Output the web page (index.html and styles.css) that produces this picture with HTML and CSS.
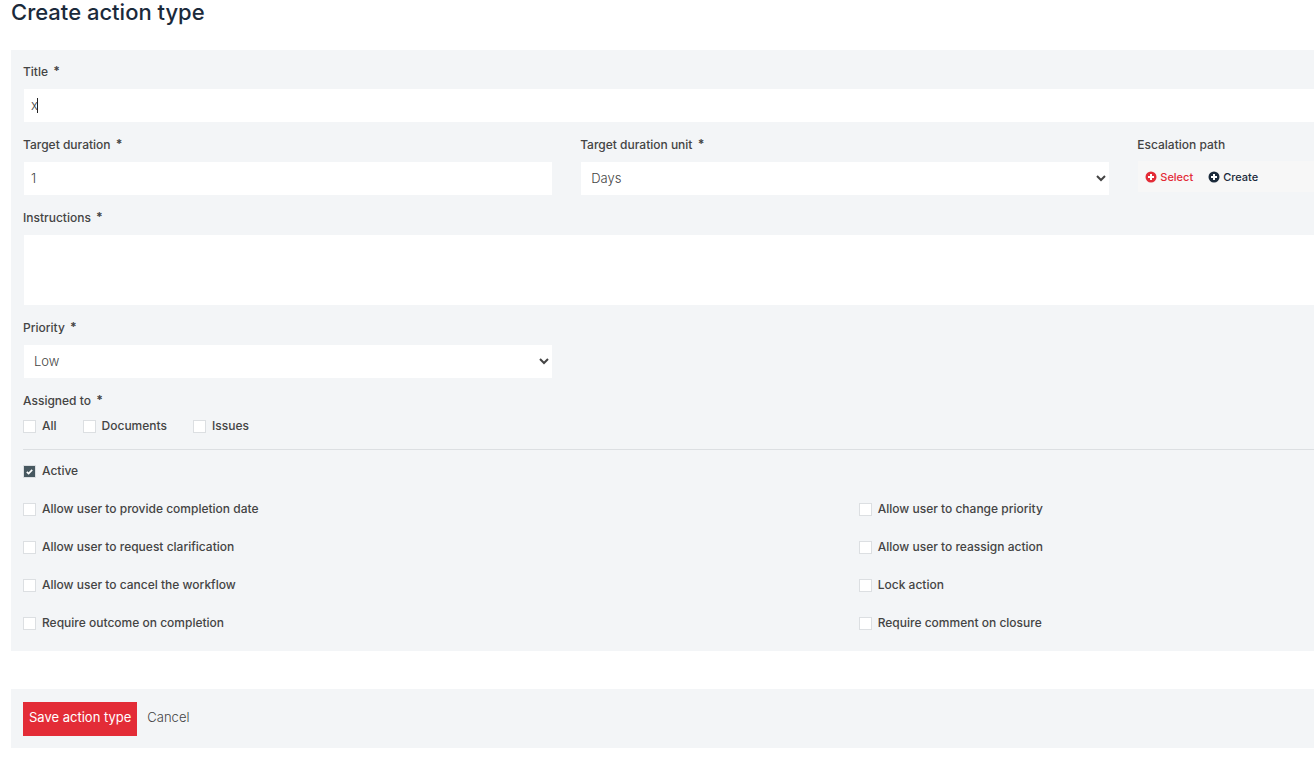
FILE: index.html
```html
<!DOCTYPE html>
<html lang="en">
<head>
  <meta charset="UTF-8" />
  <meta name="viewport" content="width=device-width, initial-scale=1.0" />
  <title>Create action type</title>
  <link rel="stylesheet" href="styles.css">
</head>
<body>
  <h1>Create action type</h1>

  <form>
    <div class="panel">
      <div class="field">
        <label for="title">Title <span class="required">*</span></label>
        <div class="input-wrap">
          <input type="text" id="title" class="full" value="x">
          <span class="caret"></span>
        </div>
      </div>

      <div class="row">
        <div class="field">
          <label for="duration">Target duration <span class="required">*</span></label>
          <input type="text" id="duration" value="1">
        </div>
        <div class="field">
          <label for="unit">Target duration unit <span class="required">*</span></label>
          <select id="unit">
            <option>Days</option>
            <option>Weeks</option>
            <option>Months</option>
          </select>
        </div>
        <div class="field">
          <span class="label">Escalation path</span>
          <div class="picker">
            <a href="#" class="pick-select">
              <svg viewBox="0 0 12 12" aria-hidden="true"><circle cx="6" cy="6" r="5.5" /><path d="M6 3v6M3 6h6" /></svg>
              Select
            </a>
            <a href="#">
              <svg viewBox="0 0 12 12" aria-hidden="true"><circle cx="6" cy="6" r="5.5" /><path d="M6 3v6M3 6h6" /></svg>
              Create
            </a>
          </div>
        </div>
      </div>

      <div class="field">
        <label for="instructions">Instructions <span class="required">*</span></label>
        <textarea id="instructions" class="full"></textarea>
      </div>

      <div class="row">
        <div class="field">
          <label for="priority">Priority <span class="required">*</span></label>
          <select id="priority">
            <option>Low</option>
            <option>Medium</option>
            <option>High</option>
          </select>
        </div>
      </div>

      <fieldset>
        <legend>Assigned to <span class="required">*</span></legend>
        <div class="assigned">
          <label class="check"><input type="checkbox"> All</label>
          <label class="check"><input type="checkbox"> Documents</label>
          <label class="check"><input type="checkbox"> Issues</label>
        </div>
      </fieldset>

      <hr>

      <div class="options">
        <label class="check active"><input type="checkbox" checked> Active</label>
        <label class="check"><input type="checkbox"> Allow user to provide completion date</label>
        <label class="check"><input type="checkbox"> Allow user to change priority</label>
        <label class="check"><input type="checkbox"> Allow user to request clarification</label>
        <label class="check"><input type="checkbox"> Allow user to reassign action</label>
        <label class="check"><input type="checkbox"> Allow user to cancel the workflow</label>
        <label class="check"><input type="checkbox"> Lock action</label>
        <label class="check"><input type="checkbox"> Require outcome on completion</label>
        <label class="check"><input type="checkbox"> Require comment on closure</label>
      </div>
    </div>

    <div class="panel actions">
      <button type="submit" class="save">Save action type</button>
      <a href="#" class="cancel">Cancel</a>
    </div>
  </form>
</body>
</html>
```
FILE: styles.css
```css
* {
  box-sizing: border-box;
}
body {
  margin: 0;
  padding-left: 11px;
  background: #fff;
  color: #444;
  font-family: Inter, "Liberation Sans", sans-serif;
  font-size: 12px;
  line-height: 20px;
}
h1 {
  margin: 0 0 26px;
  color: #1b2a3b;
  font-size: 22px;
  font-weight: 500;
  line-height: 24px;
}
.panel {
  background: #f3f5f7;
  padding: 12px 0 18px 12px;
}
.field {
  margin-bottom: 12px;
}
.field label, .label, legend {
  display: block;
  margin-bottom: 6px;
  padding: 0;
  font-weight: 500;
}
.required {
  margin-left: 2px;
  font-weight: 700;
  line-height: 1;
  vertical-align: 1px;
}
.row {
  display: grid;
  grid-template-columns: 3fr 3fr 1fr;
  column-gap: 27px;
}
input[type="text"], select, textarea {
  display: block;
  width: 100%;
  height: 35px;
  margin: 0;
  padding: 0 7px 2px;
  border: 1px solid #f3f5f7;
  border-radius: 0;
  outline: none;
  background: #fff;
  color: #444;
  font-family: inherit;
  font-size: 13px;
  font-weight: 300;
}
select {
  padding: 0 6px 1px;
}
textarea {
  height: 72px;
  resize: none;
}
input.full, textarea.full {
  border-right: 0;
}
.input-wrap {
  position: relative;
}
.caret {
  position: absolute;
  top: 10px;
  left: 14px;
  width: 1px;
  height: 15px;
  background: #222;
}
.picker {
  display: flex;
  gap: 15px;
  height: 31px;
  margin-left: 1px;
  padding-left: 7px;
  align-items: center;
  background: #f7f7f7;
}
.picker a {
  display: flex;
  gap: 3px;
  align-items: center;
  color: #1b2a3b;
  font-size: 11px;
  font-weight: 500;
  text-decoration: none;
}
.picker svg {
  width: 12px;
  height: 12px;
  fill: #1b2a3b;
  stroke: #fff;
  stroke-width: 2;
}
.picker circle {
  stroke: none;
}
.picker .pick-select {
  color: #e32c37;
}
.pick-select svg {
  fill: #e32c37;
}
fieldset {
  margin: 0;
  padding: 0;
  border: 0;
}
legend {
  margin-bottom: 5px;
}
.check {
  display: flex;
  gap: 6px;
  align-items: center;
  font-weight: 500;
}
.check input {
  appearance: none;
  width: 13px;
  height: 13px;
  margin: 0;
  border: 1px solid #dcdfe2;
  background: #fff;
}
.check input:checked {
  background: #475860 url("data:image/svg+xml,%3Csvg xmlns='http://www.w3.org/2000/svg' viewBox='0 0 11 11'%3E%3Cpath d='M2.8 5.8l1.8 1.7 3.6-3.6' fill='none' stroke='%23fff' stroke-width='1.7'/%3E%3C/svg%3E") center / 11px no-repeat;
}
.assigned {
  display: flex;
  gap: 26px;
}
hr {
  margin: 13px 0 11px;
  border: 0;
  border-top: 1px solid #dcdfe2;
}
.options {
  display: grid;
  grid-template-columns: 11fr 6fr;
  gap: 18px 1px;
}
.active {
  grid-column: 1 / -1;
}
.actions {
  display: flex;
  gap: 10px;
  align-items: center;
  margin-top: 38px;
  padding: 13px 0 12px 12px;
}
.save {
  height: 34px;
  padding: 0 6px 4px;
  border: 0;
  background: #e32c37;
  color: #fff;
  font-family: inherit;
  font-size: 13px;
  cursor: pointer;
}
.cancel {
  padding-bottom: 4px;
  color: #444;
  font-size: 13px;
  font-weight: 300;
  text-decoration: none;
}
```
